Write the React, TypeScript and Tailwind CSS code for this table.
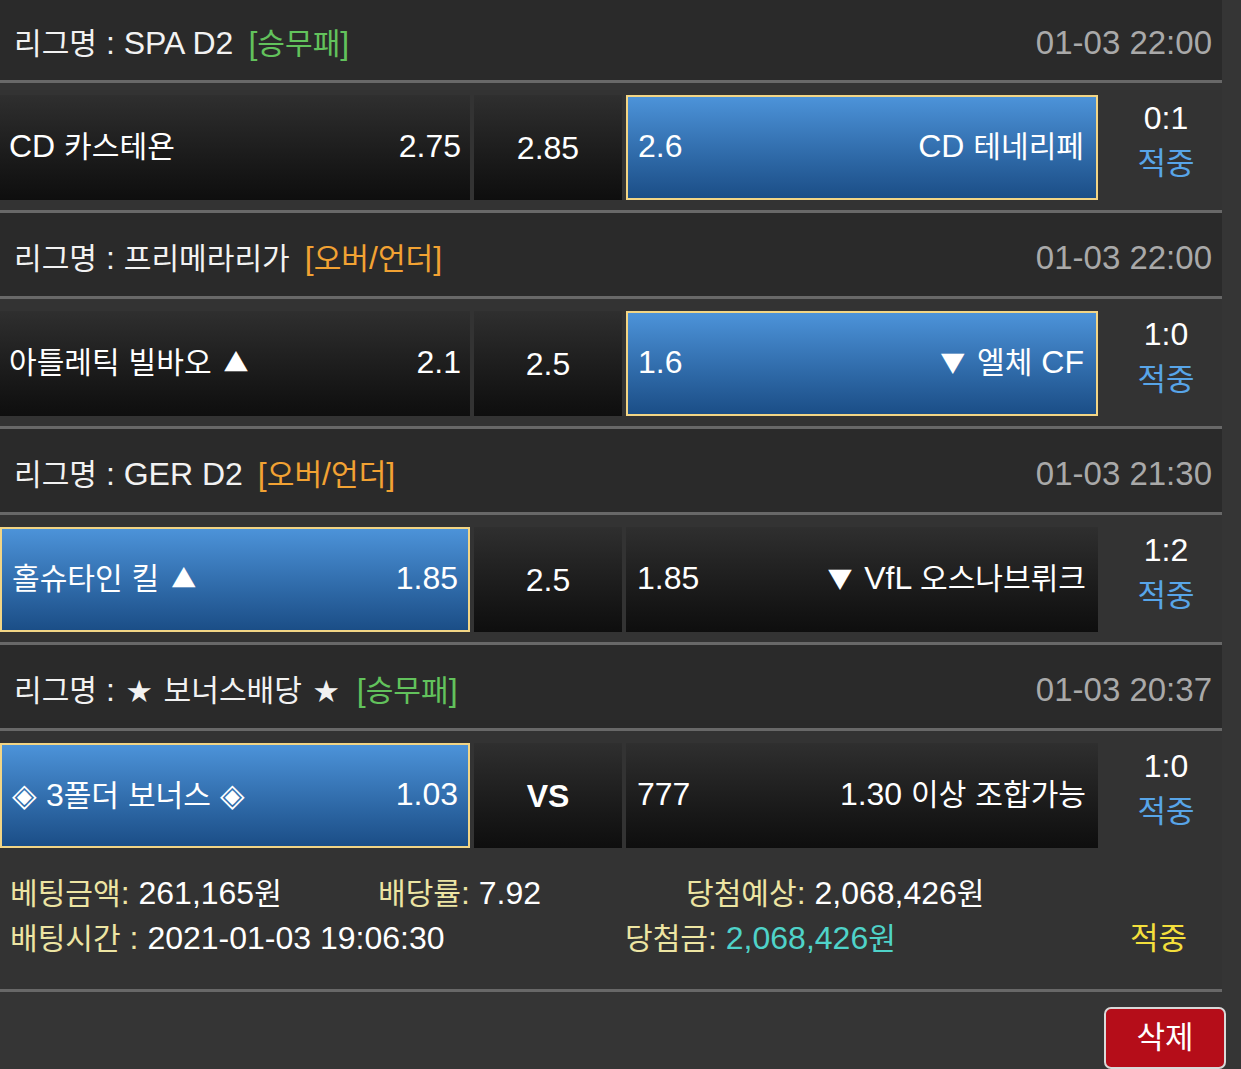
import React from 'react';

type Side = { text: string; odds: string; picked?: boolean };
type Match = {
  league: string;
  tag: string;
  tagColor: 'green' | 'orange';
  time: string;
  home: Side;
  draw: string;
  away: Side;
  score: string;
};

const matches: Match[] = [
  {
    league: '리그명 : SPA D2',
    tag: '[승무패]',
    tagColor: 'green',
    time: '01-03 22:00',
    home: { text: 'CD 카스테욘', odds: '2.75' },
    draw: '2.85',
    away: { text: 'CD 테네리페', odds: '2.6', picked: true },
    score: '0:1',
  },
  {
    league: '리그명 : 프리메라리가',
    tag: '[오버/언더]',
    tagColor: 'orange',
    time: '01-03 22:00',
    home: { text: '아틀레틱 빌바오 ▲', odds: '2.1' },
    draw: '2.5',
    away: { text: '▼ 엘체 CF', odds: '1.6', picked: true },
    score: '1:0',
  },
  {
    league: '리그명 : GER D2',
    tag: '[오버/언더]',
    tagColor: 'orange',
    time: '01-03 21:30',
    home: { text: '홀슈타인 킬 ▲', odds: '1.85', picked: true },
    draw: '2.5',
    away: { text: '▼ VfL 오스나브뤼크', odds: '1.85' },
    score: '1:2',
  },
  {
    league: '리그명 : ★ 보너스배당 ★',
    tag: '[승무패]',
    tagColor: 'green',
    time: '01-03 20:37',
    home: { text: '◈ 3폴더 보너스 ◈', odds: '1.03', picked: true },
    draw: 'VS',
    away: { text: '1.30 이상 조합가능', odds: '777' },
    score: '1:0',
  },
];

// hangul renders a bit narrower than the latin text in the original, shrink those runs
function T({ children }: { children: string }) {
  const parts = children.split(/([\uAC00-\uD7A3]+|[▲▼◈★])/);
  return (
    <>
      {parts.map((p, i) => {
        if (!p) return null;
        if (p === '◈')
          return (
            <span key={i} className="font-['Noto_Sans_CJK_KR'] text-[1em]">
              {p}
            </span>
          );
        if (/^[▲▼★]$/.test(p))
          return (
            <span key={i} className="font-['Noto_Sans_CJK_KR'] text-[0.78em] align-[1px] mx-[3px]">
              {p}
            </span>
          );
        if (/^[\uAC00-\uD7A3]+$/.test(p))
          return (
            <span key={i} className="text-[0.94em]">
              {p}
            </span>
          );
        return <React.Fragment key={i}>{p}</React.Fragment>;
      })}
    </>
  );
}

const darkCell = 'bg-gradient-to-b from-[#2f2f2f] to-[#0e0e0e]';
const blueCell = 'bg-gradient-to-b from-[#4c93d9] to-[#1b4e87] border-2 border-[#f2d585]';

function Line() {
  return <div className="h-[3px] bg-[#686868]" />;
}

function MatchBlock({ m, first, last }: { m: Match; first: boolean; last: boolean }) {
  return (
    <>
      {/* league header */}
      <div className={`${first ? 'h-[80px]' : 'h-[83px]'} bg-[#2a2a2a] flex items-center justify-between pl-[14px] pr-[10px] pt-[6px]`}>
        <div className="text-[32px] text-[#f2f2f2] whitespace-nowrap">
          <T>{m.league}</T>
          <span className={`ml-[15px] ${m.tagColor === 'green' ? 'text-[#62c25c]' : 'text-[#f2a233]'}`}>
            <T>{m.tag}</T>
          </span>
        </div>
        <div className="text-[33px] text-[#a9a9a9]">{m.time}</div>
      </div>
      <Line />

      {/* odds row */}
      <div className="bg-[#333333] pt-[12px] pb-[10px] flex">
        <div className="flex gap-[4px] w-[1098px] h-[105px]">
          <div className={`w-[470px] flex items-center justify-between pb-[4px] ${m.home.picked ? `${blueCell} pl-[10px] pr-[10px]` : `${darkCell} pl-[9px] pr-[9px]`}`}>
            <span className="text-[32px] text-white whitespace-nowrap">
              <T>{m.home.text}</T>
            </span>
            <span className="text-[32px] text-white">{m.home.odds}</span>
          </div>
          <div className={`w-[148px] flex items-center justify-center ${darkCell}`}>
            <span className={`text-[32px] text-white ${m.draw === 'VS' ? 'font-bold' : ''}`}>{m.draw}</span>
          </div>
          <div className={`flex-1 flex items-center justify-between pb-[4px] ${m.away.picked ? `${blueCell} pl-[10px] pr-[12px]` : `${darkCell} pl-[11px] pr-[12px]`}`}>
            <span className="text-[32px] text-white">{m.away.odds}</span>
            <span className="text-[32px] text-white whitespace-nowrap">
              <T>{m.away.text}</T>
            </span>
          </div>
        </div>
        <div className="flex-1 flex flex-col items-center pl-[12px] leading-[46px]">
          <span className="text-[32px] text-white">{m.score}</span>
          <span className="text-[31px] text-[#58a5e8]">적중</span>
        </div>
      </div>
      {!last && <Line />}
    </>
  );
}

export default function App() {
  return (
    <div className="min-h-screen bg-[#353535] font-['Liberation_Sans','Noto_Sans_CJK_KR',sans-serif] overflow-hidden">
      <div className="w-[1222px]">
        {matches.map((m, i) => (
          <MatchBlock key={i} m={m} first={i === 0} last={i === matches.length - 1} />
        ))}

        {/* bet summary */}
        <div className="bg-[#333333] pt-[13px] pb-[28px] text-[32px] leading-[45px] whitespace-nowrap">
          <div className="flex pl-[10px]">
            <span className="w-[368px]">
              <span className="text-[#ede5a3]"><T>베팅금액: </T></span>
              <span className="text-white"><T>261,165원</T></span>
            </span>
            <span className="w-[308px]">
              <span className="text-[#ede5a3]"><T>배당률: </T></span>
              <span className="text-white">7.92</span>
            </span>
            <span>
              <span className="text-[#ede5a3]"><T>당첨예상: </T></span>
              <span className="text-white"><T>2,068,426원</T></span>
            </span>
          </div>
          <div className="flex pl-[10px]">
            <span className="w-[615px]">
              <span className="text-[#ede5a3]"><T>배팅시간 : </T></span>
              <span className="text-white">2021-01-03 19:06:30</span>
            </span>
            <span className="w-[505px]">
              <span className="text-[#ede5a3]"><T>당첨금: </T></span>
              <span className="text-[#4fd3c9]"><T>2,068,426원</T></span>
            </span>
            <span className="text-[#f3df3c] text-[31px]">적중</span>
          </div>
        </div>
        <Line />
      </div>

      <div className="flex justify-end pr-[15px] pt-[15px]">
        <button className="w-[122px] h-[62px] rounded-[7px] border-2 border-[#d9d9d9] bg-[#b50d19] text-white text-[31px] flex items-center justify-center">
          삭제
        </button>
      </div>
    </div>
  );
}
